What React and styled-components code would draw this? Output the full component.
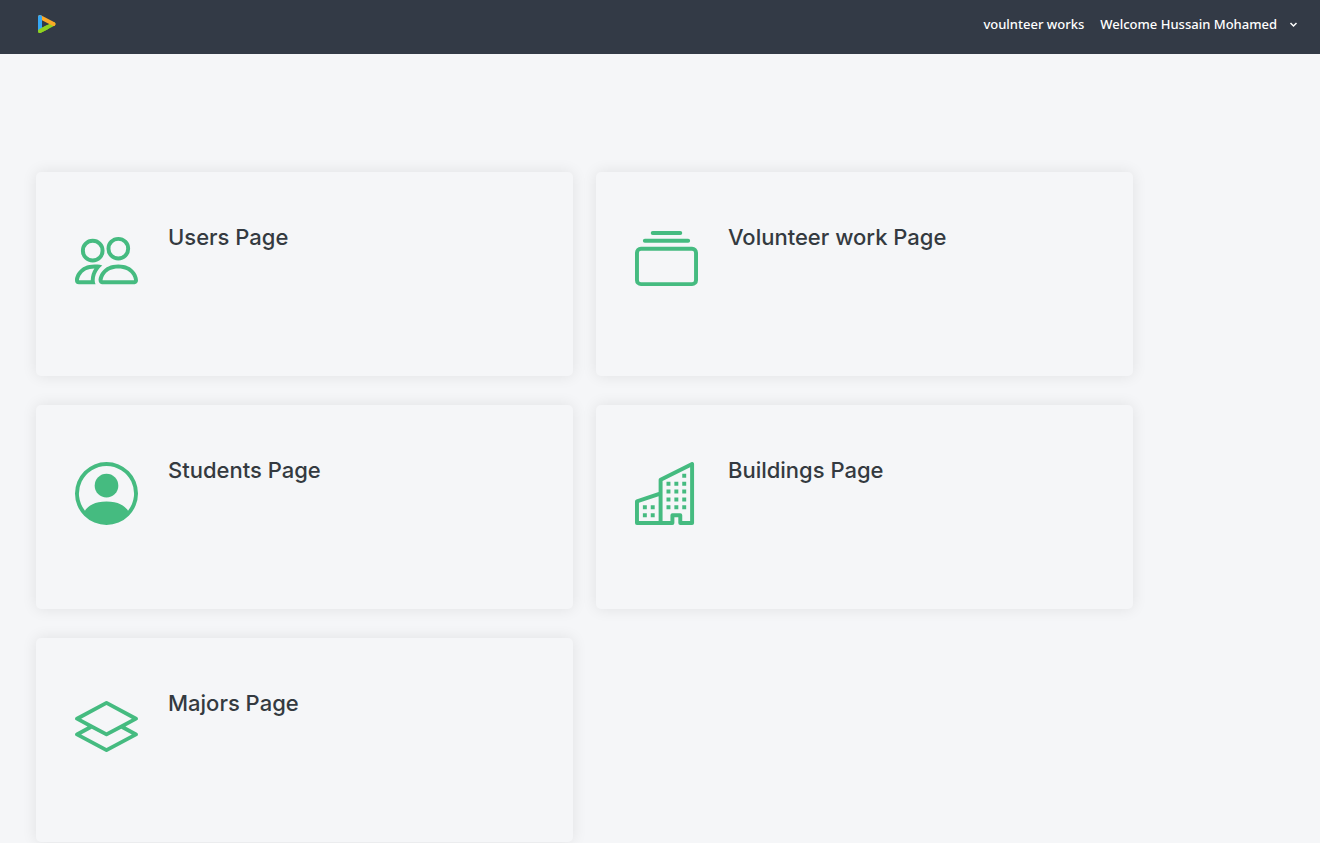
import React from "react";
import styled, { createGlobalStyle } from "styled-components";
import {
  BsPeople,
  BsCollection,
  BsPersonCircle,
  BsLayers,
} from "react-icons/bs";

const GlobalStyle = createGlobalStyle`
  *, *::before, *::after { box-sizing: border-box; }
  body {
    margin: 0;
    background: #f5f6f8;
    color: #343a40;
    font-family: Inter, "Liberation Sans", sans-serif;
  }
`;

const Header = styled.header`
  display: flex;
  align-items: center;
  justify-content: space-between;
  height: 54px;
  padding: 0 22px 6px 36px;
  background: #333a46;
`;

const HomeLink = styled.a`
  display: flex;
`;

const Nav = styled.nav`
  display: flex;
  align-items: center;
  gap: 16px;
  font: 500 13px/20px "Noto Sans", "Open Sans", sans-serif;
`;

const NavLink = styled.a`
  color: #fff;
  text-decoration: none;
`;

const UserMenu = styled.button`
  display: flex;
  align-items: center;
  gap: 12px;
  padding: 0;
  border: 0;
  background: none;
  color: #fff;
  font: inherit;
  cursor: pointer;
`;

const CardGrid = styled.main`
  display: grid;
  grid-template-columns: repeat(2, minmax(0, 1fr));
  gap: 29px 23px;
  width: 83.1%;
  margin: 118px 0 0 36px;
  padding-bottom: 29px;
`;

const Card = styled.a`
  display: flex;
  align-items: flex-start;
  gap: 30px;
  min-height: 204px;
  padding: 50px 39px;
  border-radius: 5px;
  background: #f5f6f8;
  box-shadow: 0 0 15px rgba(0, 0, 0, 0.09);
  color: inherit;
  text-decoration: none;
`;

const CardIcon = styled.span`
  display: flex;
  margin-top: 7px;
  color: #45bb80;
`;

const CardTitle = styled.h2`
  margin: 0;
  font-size: 22px;
  line-height: 30px;
  font-weight: 500;
`;

function Logo() {
  return (
    <svg width="22" height="22" viewBox="0 0 22 22" fill="none" strokeWidth="4" strokeLinecap="round" strokeLinejoin="round" role="img" aria-label="Home">
      <path d="M4 18L17.500 11" stroke="#8fd21f" />
      <path d="M4 4L17.500 11" stroke="#fba927" />
      <path d="M4 4V17" stroke="#35a8f5" />
      <path d="M4 18L11 14.400" stroke="#8fd21f" />
    </svg>
  );
}

function Chevron() {
  return (
    <svg width="9" height="9" viewBox="0 0 9 9" fill="none" stroke="currentColor" strokeWidth="1.500" aria-hidden="true">
      <path d="M1.500 3L4.500 6L7.500 3" />
    </svg>
  );
}

function BuildingIcon({ size }) {
  return (
    <svg width={size} height={size} viewBox="0 0 16 16" fill="currentColor" aria-hidden="true">
      <path fillRule="evenodd" d="M14.763.075A.5.5 0 0 1 15 .5v15a.5.5 0 0 1-.5.5h-3a.5.5 0 0 1-.5-.5V14h-1v1.500a.5.5 0 0 1-.5.5h-9a.5.5 0 0 1-.5-.5V10a.5.5 0 0 1 .342-.474L6 7.640V4.500a.5.5 0 0 1 .276-.447l8-4a.5.5 0 0 1 .487.022zM6 8.694 1 10.360V15h5V8.694zM7 15h2v-1.500a.5.5 0 0 1 .5-.5h2a.5.5 0 0 1 .5.5V15h2V1.309l-7 3.500V15z" />
      <path d="M2 11h1v1H2v-1zm2 0h1v1H4v-1zm-2 2h1v1H2v-1zm2 0h1v1H4v-1zm4-4h1v1H8V9zm2 0h1v1h-1V9zm-2 2h1v1H8v-1zm2 0h1v1h-1v-1zm2-2h1v1h-1V9zm0 2h1v1h-1v-1zM8 7h1v1H8V7zm2 0h1v1h-1V7zm2 0h1v1h-1V7zM8 5h1v1H8V5zm2 0h1v1h-1V5zm2 0h1v1h-1V5zm0-2h1v1h-1V3z" />
    </svg>
  );
}

const pages = [
  { title: "Users Page", href: "#users", Icon: BsPeople },
  { title: "Volunteer work Page", href: "#volunteer-work", Icon: BsCollection },
  { title: "Students Page", href: "#students", Icon: BsPersonCircle },
  { title: "Buildings Page", href: "#buildings", Icon: BuildingIcon },
  { title: "Majors Page", href: "#majors", Icon: BsLayers },
];

export default function App() {
  return (
    <>
      <GlobalStyle />
      <Header>
        <HomeLink href="#home">
          <Logo />
        </HomeLink>
        <Nav>
          <NavLink href="#works">voulnteer works</NavLink>
          <UserMenu type="button" aria-haspopup="menu">
            Welcome Hussain Mohamed
            <Chevron />
          </UserMenu>
        </Nav>
      </Header>
      <CardGrid>
        {pages.map(({ title, href, Icon }) => (
          <Card key={title} href={href}>
            <CardIcon>
              <Icon size={63} />
            </CardIcon>
            <CardTitle>{title}</CardTitle>
          </Card>
        ))}
      </CardGrid>
    </>
  );
}
